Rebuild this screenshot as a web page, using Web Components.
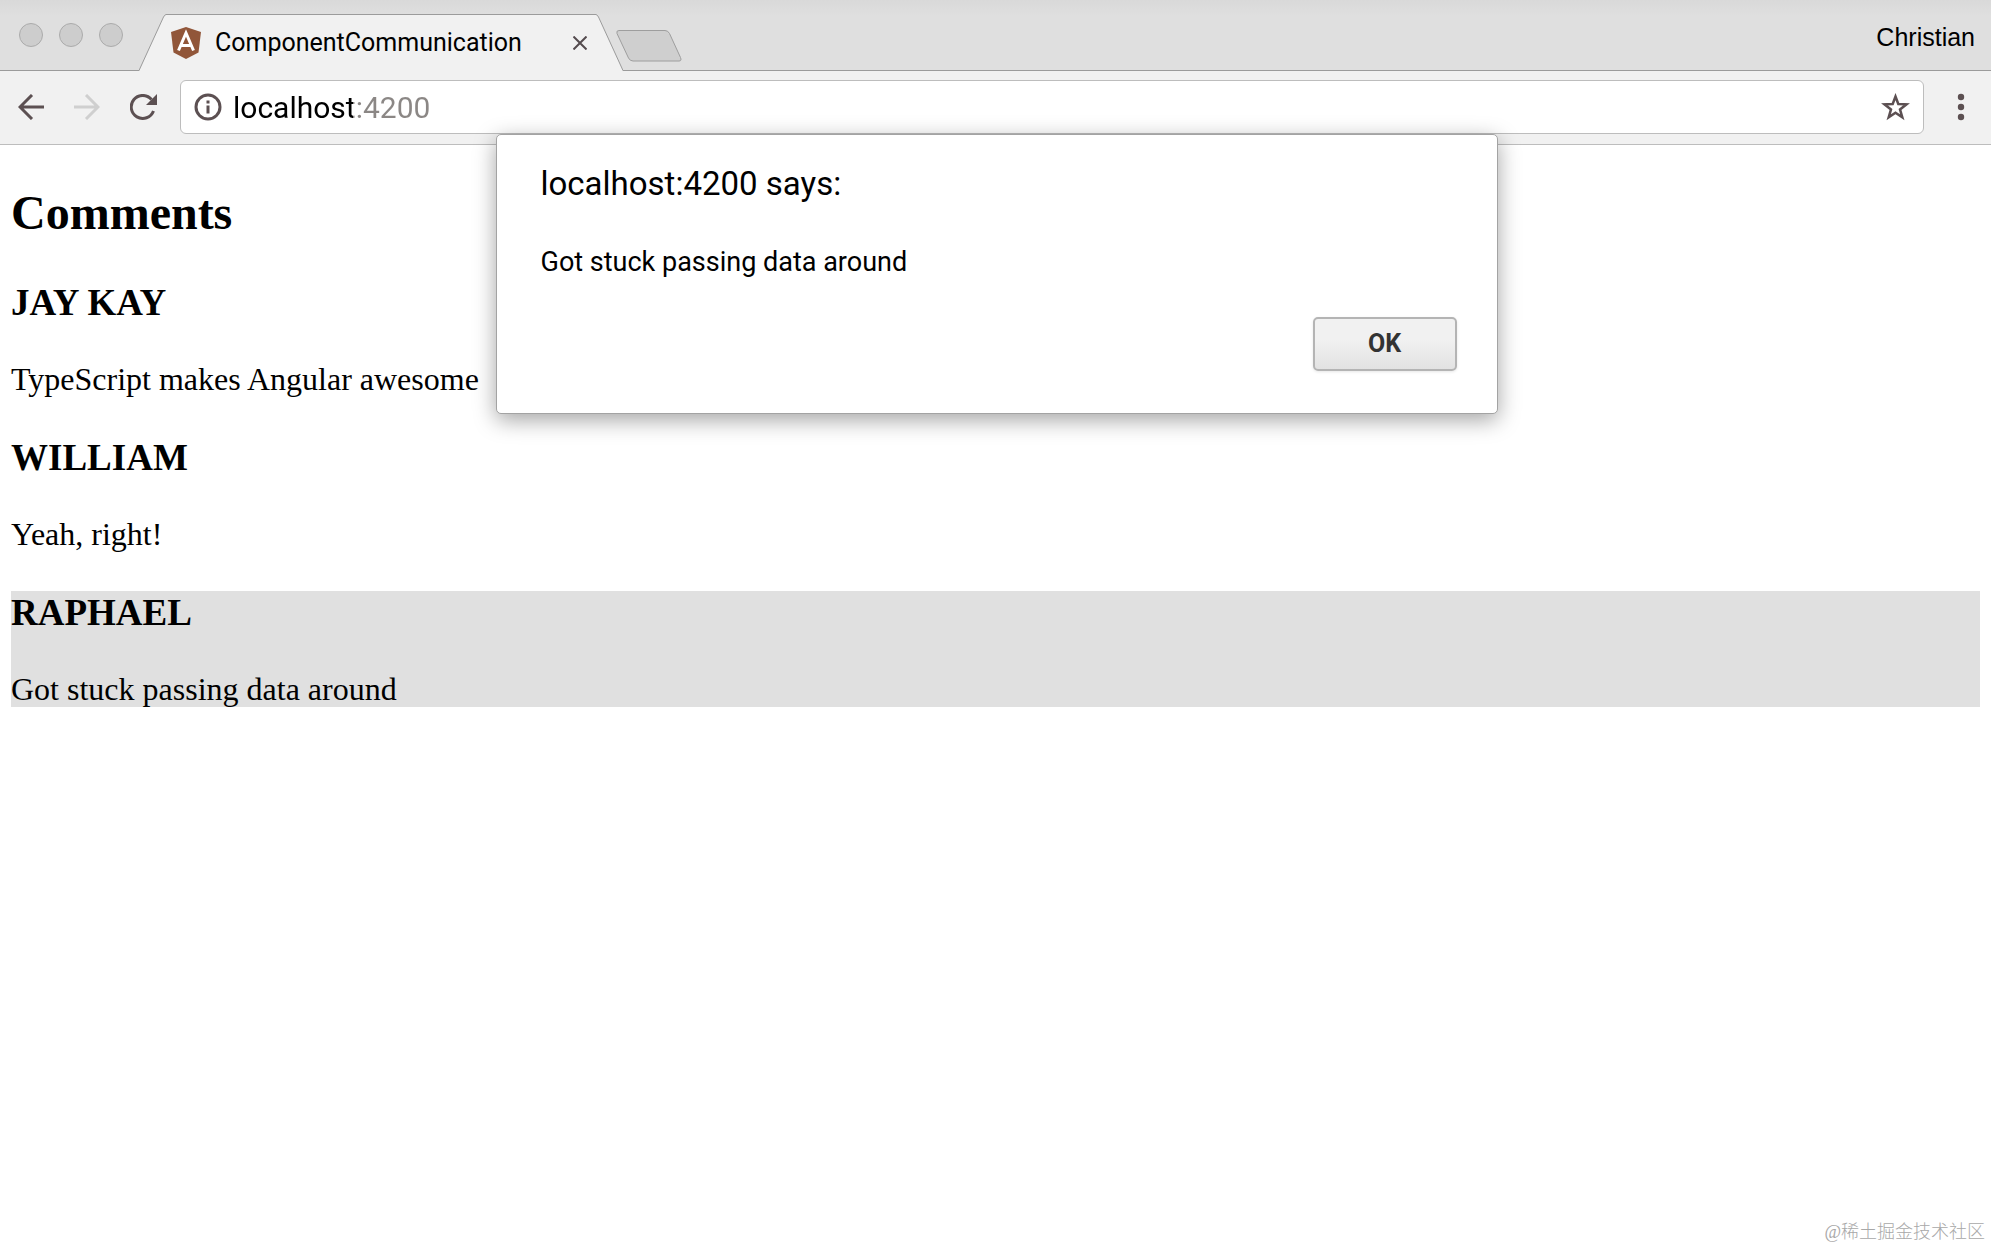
<!DOCTYPE html>
<html lang="en">
<head>
<meta charset="utf-8">
<title>ComponentCommunication</title>
<style>
    body {
        margin: 0;
        background: #fff;
        color: #000;
        font-family: Roboto, "Liberation Sans", sans-serif;
    }
</style>
</head>
<body>
<browser-window>
    <tab-strip slot="tabs" profile="Christian">
        <browser-tab>ComponentCommunication</browser-tab>
    </tab-strip>
    <nav-toolbar slot="toolbar" address="localhost:4200"></nav-toolbar>
    <comment-list heading="Comments">
        <comment-item author="Jay Kay">TypeScript makes Angular awesome</comment-item>
        <comment-item author="William">Yeah, right!</comment-item>
        <comment-item author="Raphael" selected>Got stuck passing data around</comment-item>
    </comment-list>
    <alert-dialog heading="localhost:4200 says:">Got stuck passing data around</alert-dialog>
    <page-watermark slot="footer" lang="zh">@稀土掘金技术社区</page-watermark>
</browser-window>

<script>
class BrowserWindow extends HTMLElement{
    constructor(){
        super();
        this.shadowDOM = this.attachShadow({mode: "open"});
    }

    connectedCallback(){
        this.shadowDOM.innerHTML = `
        <style>
            :host {
                display: flex;
                flex-direction: column;
                min-height: 100vh;
            }
            main {
                position: relative;
                flex: 1;
            }
        </style>
        <slot name="tabs"></slot>
        <slot name="toolbar"></slot>
        <main><slot></slot></main>
        <slot name="footer"></slot>`;
    }
}

class TabStrip extends HTMLElement{
    constructor(){
        super();
        this.shadowDOM = this.attachShadow({mode: "open"});
    }

    connectedCallback(){
        this.shadowDOM.innerHTML = `
        <style>
            :host {
                display: flex;
                align-items: flex-start;
                box-sizing: border-box;
                height: 71px;
                padding: 0 16px 0 19px;
                background: linear-gradient(#d9d9d9, #dfdfdf 16px);
                border-bottom: 1px solid #9b9b9b;
            }
            button {
                padding: 0;
                border: 0;
                background: none;
                color: inherit;
            }
            .lights {
                display: flex;
                gap: 16px;
                margin: 23px 16px 0 0;
            }
            .lights button {
                box-sizing: border-box;
                width: 24px;
                height: 24px;
                border: 1px solid #ababab;
                border-radius: 50%;
                background: #cdcdcd;
            }
            .new-tab {
                margin: 30px auto 0 -8px;
            }
            svg {
                display: block;
            }
            .profile {
                margin-top: 23px;
                font: 25px/28px "Liberation Sans", sans-serif;
            }
        </style>
        <div class="lights">
            <button aria-label="Close"></button>
            <button aria-label="Minimize"></button>
            <button aria-label="Zoom"></button>
        </div>
        <slot></slot>
        <button class="new-tab" aria-label="New tab">
            <svg width="68" height="32" viewBox="0 0 68 32" fill="#cfcfcf" stroke="#9e9e9e">
                <path d="M4 .5H50Q53 .5 54.500 3.500L65.500 27.500Q67 31 64 31H18Q15 31 13.500 28L2 3.500Q1 .5 4 .5Z"/>
            </svg>
        </button>
        <button class="profile"></button>`;
        this.shadowDOM.querySelector(".profile").textContent = this.getAttribute("profile");
    }
}

class BrowserTab extends HTMLElement{
    constructor(){
        super();
        this.shadowDOM = this.attachShadow({mode: "open"});
    }

    connectedCallback(){
        this.shadowDOM.innerHTML = `
        <style>
            :host {
                display: flex;
                height: 57px;
                margin-top: 14px;
            }
            svg {
                display: block;
                flex: none;
            }
            .label {
                display: flex;
                align-items: center;
                box-sizing: border-box;
                width: 430px;
                padding: 0 5px;
                border-top: 1px solid #9b9b9b;
                background: #f1f1f1;
                font-size: 25px;
                line-height: 30px;
            }
            .title {
                flex: 1;
                margin-left: 14px;
            }
            button {
                padding: 4px;
                border: 0;
                background: none;
            }
        </style>
        <svg width="27" height="57" viewBox="0 0 27 57">
            <path d="M0 57L24.500 3Q26 .5 27 .5V57Z" fill="#f1f1f1"/>
            <path d="M0 56.500L24.500 3Q26 .5 27 .5" fill="none" stroke="#9b9b9b"/>
        </svg>
        <div class="label">
            <svg width="30" height="32" viewBox="0 0 30 32">
                <path d="M15 0L30 5L27.500 25.500L15 32L2.500 25.500L0 5Z" fill="#915639"/>
                <path d="M7.500 23.500L15 6L22.500 23.500M10.500 18.500H19.500" fill="none" stroke="#fff" stroke-width="3"/>
            </svg>
            <span class="title"><slot></slot></span>
            <button aria-label="Close tab">
                <svg width="14" height="14" viewBox="0 0 14 14" stroke="#544b4e" stroke-width="2">
                    <path d="M.5 .5L13.500 13.500M13.500 .5L.5 13.500"/>
                </svg>
            </button>
        </div>
        <svg width="27" height="57" viewBox="0 0 27 57">
            <path d="M27 57L2.500 3Q1 .5 0 .5V57Z" fill="#f1f1f1"/>
            <path d="M27 56.500L2.500 3Q1 .5 0 .5" fill="none" stroke="#9b9b9b"/>
        </svg>`;
    }
}

class NavToolbar extends HTMLElement{
    constructor(){
        super();
        this.shadowDOM = this.attachShadow({mode: "open"});
    }

    connectedCallback(){
        this.shadowDOM.innerHTML = `
        <style>
            :host {
                display: flex;
                align-items: center;
                padding: 9px 26px 10px 18px;
                background: #f1f1f1;
                border-bottom: 1px solid #bdbdbd;
            }
            button {
                padding: 0;
                border: 0;
                background: none;
                color: #5c5052;
            }
            button:disabled {
                color: #cfcfcf;
            }
            svg {
                display: block;
                fill: none;
                stroke: currentColor;
                stroke-width: 3;
            }
            .nav {
                display: flex;
                gap: 30px;
                margin-right: 23px;
            }
            .omnibox {
                display: flex;
                flex: 1;
                align-items: center;
                box-sizing: border-box;
                height: 54px;
                margin-right: 33px;
                padding: 0 13px;
                border: 1px solid #bdbdbd;
                border-radius: 6px;
                background: #fff;
            }
            /* the host name is black, the port is grey */
            input {
                flex: 1;
                min-width: 0;
                margin-left: 11px;
                padding: 2px 0 0;
                border: 0;
                outline: 0;
                font: inherit;
                font-size: 30px;
                line-height: 36px;
                color: transparent;
                background: linear-gradient(90deg, #000 120px, #8b8785 120px);
                -webkit-background-clip: text;
                background-clip: text;
            }
        </style>
        <div class="nav">
            <button aria-label="Back">
                <svg width="26" height="26" viewBox="0 0 26 26"><path d="M26 13H2M14 1L2 13L14 25"/></svg>
            </button>
            <button aria-label="Forward" disabled>
                <svg width="26" height="26" viewBox="0 0 26 26"><path d="M0 13H24M12 1L24 13L12 25"/></svg>
            </button>
            <button aria-label="Reload">
                <svg width="27" height="26" viewBox="0 0 27 26">
                    <path d="M23.500 17A11.500 11.500 0 1 1 21.500 5.500"/>
                    <path d="M27 0V11H16Z" fill="currentColor" stroke="none"/>
                </svg>
            </button>
        </div>
        <div class="omnibox">
            <button aria-label="Site information">
                <svg width="28" height="28" viewBox="0 0 28 28">
                    <circle cx="14" cy="14" r="12"/>
                    <path d="M14 12.500V20.500M14 7.500V10.500"/>
                </svg>
            </button>
            <input type="text" aria-label="Address" spellcheck="false">
            <button aria-label="Bookmark this page">
                <svg width="29" height="28" viewBox="0 0 29 28">
                    <path d="M14.500 3.500L17.300 11L25.500 11.300L19 16.400L21.300 24.300L14.500 19.700L7.700 24.300L10 16.400L3.500 11.300L11.700 11Z" stroke-width="2.500"/>
                </svg>
            </button>
        </div>
        <button aria-label="Menu">
            <svg width="8" height="28" viewBox="0 0 8 28">
                <g fill="currentColor" stroke="none">
                    <circle cx="4" cy="4" r="3.200"/><circle cx="4" cy="14" r="3.200"/><circle cx="4" cy="24" r="3.200"/>
                </g>
            </svg>
        </button>`;
        this.shadowDOM.querySelector("input").value = this.getAttribute("address");
    }
}

class CommentList extends HTMLElement{
    constructor(){
        super();
        this.shadowDOM = this.attachShadow({mode: "open"});
    }

    connectedCallback(){
        this.shadowDOM.innerHTML = `
        <style>
            :host {
                display: block;
                padding: 41px 11px;
                font-family: "Liberation Serif", serif;
            }
            h2 {
                margin: 0 0 41px;
                font-size: 48px;
                line-height: 54px;
            }
            .items {
                display: grid;
                gap: 39px;
            }
        </style>
        <h2></h2>
        <div class="items"><slot></slot></div>`;
        this.shadowDOM.querySelector("h2").textContent = this.getAttribute("heading");
    }
}

class CommentItem extends HTMLElement{
    constructor(){
        super();
        this.shadowDOM = this.attachShadow({mode: "open"});
    }

    connectedCallback(){
        this.shadowDOM.innerHTML = `
        <style>
            :host {
                display: block;
            }
            :host([selected]) {
                background: #e0e0e0;
            }
            h3 {
                margin: 0 0 37px;
                font-size: 37px;
                line-height: 43px;
            }
            p {
                margin: 0;
                font-size: 32px;
                line-height: 36px;
            }
        </style>
        <h3></h3>
        <p><slot></slot></p>`;
        this.shadowDOM.querySelector("h3").textContent = this.getAttribute("author").toUpperCase();
    }
}

class AlertDialog extends HTMLElement{
    constructor(){
        super();
        this.shadowDOM = this.attachShadow({mode: "open"});
    }

    connectedCallback(){
        this.shadowDOM.innerHTML = `
        <style>
            /* hangs from the lower edge of the toolbar, over the page */
            :host {
                position: absolute;
                top: -11px;
                left: 2px;
                right: 0;
                display: flex;
                justify-content: center;
            }
            dialog {
                position: static;
                display: flex;
                flex-direction: column;
                box-sizing: border-box;
                width: 1002px;
                max-width: 100%;
                margin: 0;
                padding: 29px 40px 42px 44px;
                border: 1px solid #a3a3a3;
                border-radius: 5px;
                background: #fff;
                color: #000;
                box-shadow: 0 6px 22px rgba(0, 0, 0, 0.36);
            }
            h1 {
                margin: 0 0 42px;
                font-size: 33px;
                font-weight: normal;
                line-height: 40px;
            }
            p {
                margin: 0 0 39px;
                font-size: 27px;
                line-height: 32px;
            }
            button {
                align-self: flex-end;
                width: 144px;
                height: 54px;
                border: 2px solid #b4b4b4;
                border-radius: 5px;
                background: linear-gradient(#f1f1f1 40%, #e2e2e2);
                box-shadow: 0 1px 3px rgba(0, 0, 0, 0.1);
                color: #333;
                font: bold 25px/30px Roboto, "Liberation Sans", sans-serif;
            }
        </style>
        <dialog open aria-labelledby="heading">
            <h1 id="heading"></h1>
            <p><slot></slot></p>
            <button>OK</button>
        </dialog>`;
        this.shadowDOM.querySelector("h1").textContent = this.getAttribute("heading");
        this.shadowDOM.querySelector("button").addEventListener("click", () => this.remove());
    }
}

class PageWatermark extends HTMLElement{
    constructor(){
        super();
        this.shadowDOM = this.attachShadow({mode: "open"});
    }

    connectedCallback(){
        this.shadowDOM.innerHTML = `
        <style>
            :host {
                display: block;
                padding: 0 6px 4px;
                color: #a8a8a8;
                font: 300 18px/24px "Liberation Serif", "Noto Sans CJK SC", serif;
                text-align: right;
            }
        </style>
        <slot></slot>`;
    }
}

customElements.define("browser-window", BrowserWindow);
customElements.define("tab-strip", TabStrip);
customElements.define("browser-tab", BrowserTab);
customElements.define("nav-toolbar", NavToolbar);
customElements.define("comment-list", CommentList);
customElements.define("comment-item", CommentItem);
customElements.define("alert-dialog", AlertDialog);
customElements.define("page-watermark", PageWatermark);
</script>
</body>
</html>
